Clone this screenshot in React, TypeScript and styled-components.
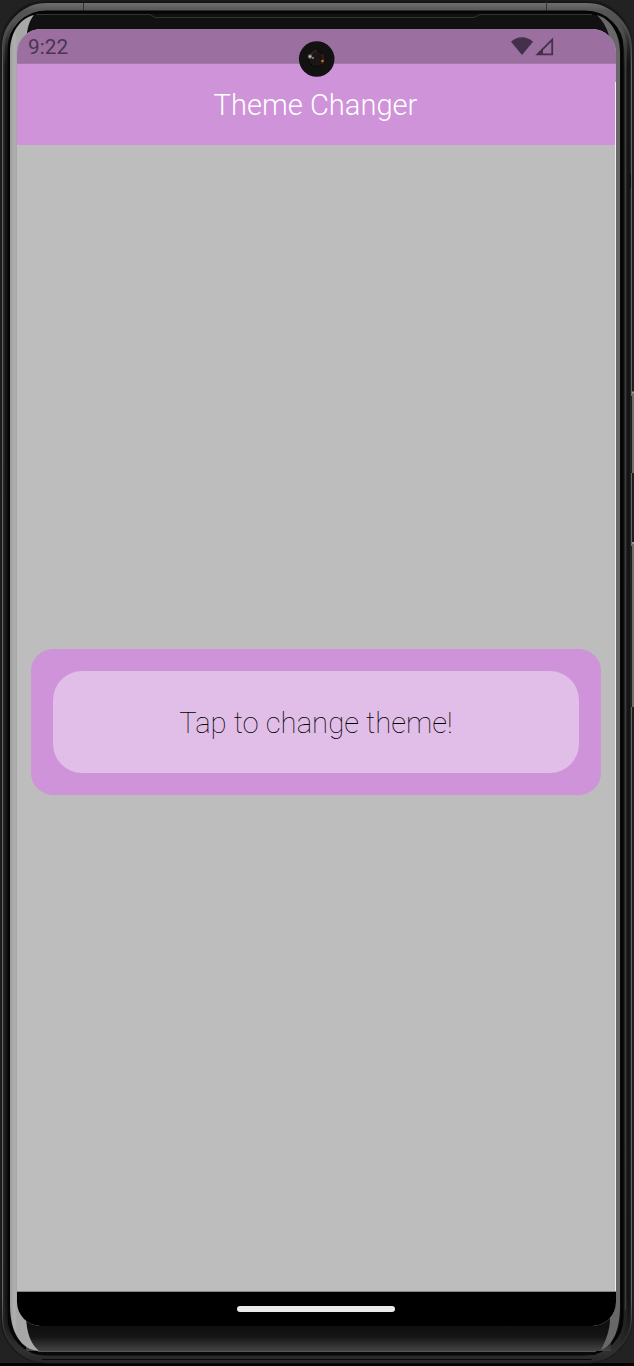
import React from "react";
import styled, { createGlobalStyle } from "styled-components";

const GlobalStyle = createGlobalStyle`
  body { margin: 0; background: #222; overflow: hidden; }
  * { box-sizing: border-box; }
`;

const Device = styled.main`
  position: relative;
  width: 634px;
  height: 1366px;
  padding: 29px 18px 40px 17px;
  font-family: Roboto, "Liberation Sans", sans-serif;
`;

const FrameArt = styled.svg`
  position: absolute;
  inset: 0;
`;

const Screen = styled.div`
  position: relative;
  display: flex;
  flex-direction: column;
  width: 599px;
  height: 1297px;
  overflow: hidden;
  border-radius: 24px;
  background: #bdbdbd;
`;

const StatusBar = styled.div`
  display: flex;
  align-items: center;
  justify-content: space-between;
  flex: 0 0 35px;
  padding: 1px 62px 0 11px;
  background: #9b6fa0;
  border-bottom: 1px solid #a577ab;
`;

const Clock = styled.time`
  font-size: 20.8px;
  line-height: 24px;
  color: #4b3550;
`;

const AppBar = styled.header`
  display: flex;
  align-items: center;
  justify-content: center;
  flex: 0 0 81px;
  background: #ce93d8;
`;

const Title = styled.h1`
  margin: 0 0 0 -2px;
  font-size: 29.1px;
  font-weight: 300;
  line-height: 36px;
  color: #fff;
`;

const Body = styled.section`
  display: flex;
  align-items: center;
  flex: 1;
  padding: 8px 15px 0 14px;
  border-bottom: 1px solid #858585;
`;

const Card = styled.div`
  flex: 1;
  padding: 22px;
  border-radius: 22px;
  background: #ce93d8;
`;

const ThemeButton = styled.button`
  display: block;
  width: 100%;
  height: 102px;
  padding: 2px 0 0;
  border: 0;
  border-radius: 29px;
  background: #e1bee7;
  color: #000;
  font-family: inherit;
  font-size: 29.3px;
  font-weight: 100;
`;

const NavBar = styled.nav`
  display: flex;
  justify-content: center;
  align-items: center;
  flex: 0 0 34px;
  padding-right: 2px;
  background: #000;
`;

const HomeHandle = styled.span`
  width: 158px;
  height: 6px;
  border-radius: 3px;
  background: #ebebe9;
`;

const EdgeHighlight = styled.span`
  position: absolute;
  right: 0;
  top: 53px;
  width: 1px;
  height: 1209px;
  background: #f3eef4;
`;

const Camera = styled.svg`
  position: absolute;
  left: 298px;
  top: 41px;
`;

function Frame() {
  return (
    <FrameArt width="634" height="1366" viewBox="0 0 634 1366" fill="none">
      <defs>
        <linearGradient id="rim" gradientUnits="userSpaceOnUse" x1="0" y1="0" x2="0" y2="1366">
          <stop offset="0" stopColor="#787878" />
          <stop offset=".008" stopColor="#555" />
          <stop offset=".022" stopColor="#505050" />
          <stop offset=".05" stopColor="#252525" />
          <stop offset=".97" stopColor="#222" />
          <stop offset=".99" stopColor="#303030" />
          <stop offset="1" stopColor="#222" />
        </linearGradient>
        <linearGradient id="sideLight" gradientUnits="userSpaceOnUse" x1="0" y1="0" x2="0" y2="1366">
          <stop offset=".015" stopColor="#666" stopOpacity="0" />
          <stop offset=".05" stopColor="#666" />
          <stop offset=".95" stopColor="#666" />
          <stop offset=".985" stopColor="#666" stopOpacity="0" />
        </linearGradient>
        <linearGradient id="sideDark" gradientUnits="userSpaceOnUse" x1="0" y1="0" x2="0" y2="1366">
          <stop offset=".015" stopColor="#141414" stopOpacity="0" />
          <stop offset=".05" stopColor="#141414" />
          <stop offset=".95" stopColor="#141414" />
          <stop offset=".985" stopColor="#141414" stopOpacity="0" />
        </linearGradient>
        <linearGradient id="chin" x1="0" y1="0" x2="0" y2="1">
          <stop offset="0" stopColor="#0e0e0e" />
          <stop offset=".45" stopColor="#151515" />
          <stop offset="1" stopColor="#444" />
        </linearGradient>
        <linearGradient id="leftGlass" gradientUnits="userSpaceOnUse" x1="10" y1="0" x2="38" y2="0">
          <stop offset="0" stopColor="#9c9c9c" />
          <stop offset=".15" stopColor="#b0b0b0" />
          <stop offset=".25" stopColor="#a6a6a6" />
          <stop offset="1" stopColor="#aaa" />
        </linearGradient>
      </defs>
      <path d="M0 1364.500H634" stroke="#000" strokeWidth="3" />
      <rect x="1.500" y="1.500" width="630" height="1361" rx="44" fill="#111" stroke="#191919" strokeWidth="2" />
      <rect x="6" y="7" width="621.500" height="1352" rx="41" stroke="url(#rim)" strokeWidth="8" />
      <rect x="2.500" y="2.500" width="629" height="1360" rx="44" stroke="url(#sideLight)" />
      <rect x="6.500" y="6.500" width="622" height="1352" rx="41" stroke="url(#sideDark)" strokeWidth="3" />
      <path d="M83.500 3V12M546.500 2V12" stroke="#333" />
      <rect x="9" y="12" width="613" height="1342" rx="37" fill="#111" stroke="#050505" strokeWidth="3" />
      <path d="M36 14.500H150L155 17.500H474L480 14.500H592" stroke="#333" />
      <rect x="26" y="1325" width="585" height="26" fill="url(#chin)" />
      <path d="M38 1351.500H596" stroke="#555" />
      <path d="M38 1353.500H596" stroke="#090909" strokeWidth="3" />
      <path d="M42 1359.500H592" stroke="#090909" />
      <path d="M34 15C20 18 10 33 10 52V1305C10 1332 21 1350 39 1351C31 1344 27 1334 26 1318V42C27 31 28 22 34 15Z" fill="url(#leftGlass)" />
      <path d="M597 15C611 19 620 34 620 53V1306C620 1332 612 1346 601 1350C606 1340 610 1330 610 1318V40C608 30 604 22 597 15Z" fill="#686868" />
      <path d="M625.500 55V1310" stroke="#3c3c3c" />
      <path d="M631 393H634V473H631ZM631 543H634V707H631Z" fill="#707068" />
      <path d="M631.500 396V473M631.500 546V707" stroke="#222" />
      <path d="M632 392.500H634M632 543H634" stroke="#999" strokeWidth="2" />
      <path d="M630 174V188" stroke="#111" strokeWidth="2" />
    </FrameArt>
  );
}

function StatusIcons() {
  return (
    <svg width="44" height="20" viewBox="510 36.700 44 20">
      <path d="M511 41.500C517 35.500 527 35.500 533 41.500L522 54.800Z" fill="#44304a" />
      <path d="M537.500 54L552.200 39.300V54Z" fill="none" stroke="#44304a" strokeWidth="1.800" />
      <path d="M537 54L543 48V54Z" fill="#44304a" />
    </svg>
  );
}

export default function App() {
  return (
    <Device>
      <GlobalStyle />
      <Frame />
      <Screen>
        <StatusBar>
          <Clock>9:22</Clock>
          <StatusIcons />
        </StatusBar>
        <AppBar>
          <Title>Theme Changer</Title>
        </AppBar>
        <Body>
          <Card>
            <ThemeButton>Tap to change theme!</ThemeButton>
          </Card>
        </Body>
        <NavBar>
          <HomeHandle />
        </NavBar>
        <EdgeHighlight />
      </Screen>
      <Camera width="37" height="36" viewBox="0 0 37 36">
        <circle cx="18.700" cy="18" r="17.800" fill="#121212" />
        <circle cx="18.500" cy="18" r="8" fill="#1c1515" stroke="#080808" />
        <path d="M13 14Q15 10 19 10M24 13Q27 18 24 23" fill="none" stroke="#342114" strokeWidth="2" />
        <circle cx="12" cy="15.500" r="2.200" fill="#64716d" />
        <circle cx="12" cy="15.500" r="1" fill="#bdd1ca" />
        <circle cx="15" cy="17" r="1" fill="#94808c" />
        <circle cx="24.500" cy="20" r="1.300" fill="#c1792d" />
      </Camera>
    </Device>
  );
}
